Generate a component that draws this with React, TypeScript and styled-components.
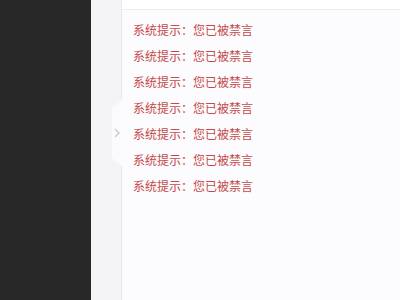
import React from "react";
import styled, { createGlobalStyle } from "styled-components";

const Global = createGlobalStyle`
  html, body { margin: 0; padding: 0; width: 400px; height: 300px; overflow: hidden; }
  body { font-family: "Microsoft YaHei", "Noto Sans CJK SC", sans-serif; }
`;

const Page = styled.div`
  display: flex;
  width: 400px;
  height: 300px;
`;

const Sidebar = styled.div`
  width: 91px;
  flex: none;
  background: #282828;
`;

const Gutter = styled.div`
  position: relative;
  width: 30px;
  flex: none;
  background: #f4f3f5;
  border-right: 1px solid #e9e8ea;
`;

const Handle = styled.div`
  position: absolute;
  right: -1px;
  top: 100px;
  width: 10px;
  height: 66px;
  display: flex;
  align-items: center;
  justify-content: center;
  background: #fbfafc;
  clip-path: polygon(100% 0, 0 12%, 0 88%, 100% 100%);
`;

const Main = styled.div`
  flex: 1;
  display: flex;
  flex-direction: column;
  background: #fcfbfd;
`;

const Header = styled.div`
  height: 9px;
  flex: none;
  background: #ffffff;
  border-bottom: 1px solid #eeedf0;
`;

const List = styled.div`
  display: flex;
  flex-direction: column;
  padding: 13px 0 0 11px;
`;

const Msg = styled.div`
  height: 26px;
  line-height: 14px;
  font-size: 12px;
  color: #c44a4a;
  white-space: nowrap;
`;

export default function App() {
  const rows = Array.from({ length: 7 });
  return (
    <>
      <Global />
      <Page>
        <Sidebar />
        <Gutter>
          <Handle>
            <svg width="6" height="10" viewBox="0 0 6 10">
              <path d="M1 1 L5 5 L1 9" fill="none" stroke="#c8c7ca" strokeWidth="1.2" />
            </svg>
          </Handle>
        </Gutter>
        <Main>
          <Header />
          <List>
            {rows.map((_, i) => (
              <Msg key={i}>系统提示：您已被禁言</Msg>
            ))}
          </List>
        </Main>
      </Page>
    </>
  );
}
